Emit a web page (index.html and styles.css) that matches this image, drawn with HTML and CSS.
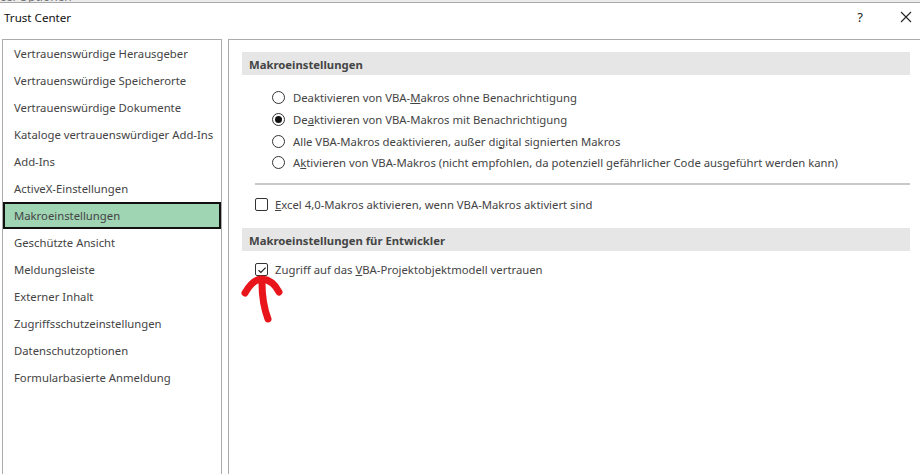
FILE: index.html
```html
<!DOCTYPE html>
<html lang="de">
<head>
<meta charset="utf-8">
<title>Trust Center</title>
<link rel="stylesheet" href="styles.css">
</head>
<body>
<div class="behind"><span class="behind-text">cel Optionen</span></div>
<div class="titlebar">
  <span class="title">Trust Center</span>
  <div class="controls">
    <span class="help">?</span>
    <svg class="close" width="12" height="12" viewBox="0 0 12 12"><path d="M1 1L11 11M11 1L1 11" stroke="#222" stroke-width="1.1" fill="none"/></svg>
  </div>
</div>
<div class="main">
  <nav class="nav">
    <div class="nav-item">Vertrauenswürdige Herausgeber</div>
    <div class="nav-item">Vertrauenswürdige Speicherorte</div>
    <div class="nav-item">Vertrauenswürdige Dokumente</div>
    <div class="nav-item">Kataloge vertrauenswürdiger Add-Ins</div>
    <div class="nav-item">Add-Ins</div>
    <div class="nav-item">ActiveX-Einstellungen</div>
    <div class="nav-item selected">Makroeinstellungen</div>
    <div class="nav-item">Geschützte Ansicht</div>
    <div class="nav-item">Meldungsleiste</div>
    <div class="nav-item">Externer Inhalt</div>
    <div class="nav-item">Zugriffsschutzeinstellungen</div>
    <div class="nav-item">Datenschutzoptionen</div>
    <div class="nav-item">Formularbasierte Anmeldung</div>
  </nav>
  <section class="content">
    <div class="section-header">Makroeinstellungen</div>
    <div class="radios">
      <div class="option"><span class="radio"></span><span>Deaktivieren von VBA-<u>M</u>akros ohne Benachrichtigung</span></div>
      <div class="option"><span class="radio checked"></span><span>De<u>a</u>ktivieren von VBA-Makros mit Benachrichtigung</span></div>
      <div class="option"><span class="radio"></span><span>Alle VBA-Makros deaktivieren, außer di<u>g</u>ital signierten Makros</span></div>
      <div class="option"><span class="radio"></span><span>A<u>k</u>tivieren von VBA-Makros (nicht empfohlen, da potenziell gefährlicher Code ausgeführt werden kann)</span></div>
    </div>
    <div class="separator"></div>
    <div class="check-row first"><span class="checkbox"></span><span><u>E</u>xcel 4,0-Makros aktivieren, wenn VBA-Makros aktiviert sind</span></div>
    <div class="section-header second">Makroeinstellungen für Entwickler</div>
    <div class="check-row dev">
      <span class="checkbox checked"><svg width="10" height="10" viewBox="0 0 10 10"><path d="M1.5 5.2L3.9 7.4L8.6 2.6" stroke="#222" stroke-width="1.2" fill="none"/></svg></span>
      <span>Zugriff auf das <u>V</u>BA-Projektobjektmodell vertrauen</span>
      <svg class="arrow" width="48" height="50" viewBox="0 0 48 50"><path d="M6 18 Q14 4 23 4 Q34 5 40 17 M23 8 Q23 28 29 44" stroke="#e8161b" stroke-width="7" stroke-linecap="round" stroke-linejoin="round" fill="none"/></svg>
    </div>
  </section>
</div>
</body>
</html>
```
FILE: styles.css
```css
* { box-sizing: border-box; }
html, body { margin: 0; padding: 0; }
body {
  width: 920px;
  height: 474px;
  overflow: hidden;
  background: #fff;
  font-family: "Noto Sans", "Open Sans", sans-serif;
  font-size: 11.3px;
  color: #444;
}
.behind {
  height: 3px;
  background: #ececec;
  border-bottom: 1px solid #a9a9a9;
  overflow: hidden;
}
.behind-text {
  display: block;
  margin-top: -10px;
  font-size: 12px;
  color: #777;
  line-height: 14px;
}
.titlebar {
  height: 36px;
  display: flex;
  align-items: center;
  justify-content: space-between;
  padding: 0 0 8px 4px;
}
.title {
  color: #111;
  font-size: 11.6px;
}
.controls {
  display: flex;
  align-items: center;
}
.help {
  color: #222;
  font-size: 13px;
  width: 46px;
  text-align: center;
  margin-right: 17px;
}
.close {
  margin-right: 8px;
}
.main {
  display: flex;
  gap: 6px;
  padding-left: 2px;
  height: 440px;
}
.nav {
  width: 220px;
  border: 1px solid #ababab;
  border-bottom: none;
  display: flex;
  flex-direction: column;
}
.nav-item {
  height: 27px;
  line-height: 28px;
  padding-left: 11px;
  white-space: nowrap;
  color: #444;
}
.nav-item.selected {
  background: #a0d5b4;
  border: 2px solid #111;
  line-height: 24px;
  padding-left: 9px;
}
.content {
  flex: 1;
  border-top: 1px solid #ababab;
  border-left: 1px solid #ababab;
  padding: 12px 10px 0 13px;
}
.section-header {
  height: 23px;
  line-height: 25px;
  background: #e6e6e6;
  font-weight: bold;
  padding-left: 7px;
  color: #444;
}
.radios {
  padding: 12px 0 0 30px;
  display: flex;
  flex-direction: column;
}
.option {
  height: 21.7px;
  display: flex;
  align-items: center;
  gap: 8px;
  white-space: nowrap;
}
.radio {
  width: 13px;
  height: 13px;
  border: 1px solid #333;
  border-radius: 50%;
  display: flex;
  align-items: center;
  justify-content: center;
  flex: none;
}
.radio.checked::after {
  content: "";
  width: 7px;
  height: 7px;
  border-radius: 50%;
  background: #111;
}
.separator {
  margin: 9px 0 0 13px;
  height: 2px;
  background: #c8c8c8;
}
.check-row {
  display: flex;
  align-items: center;
  gap: 7px;
  white-space: nowrap;
  height: 20px;
  padding-left: 13px;
}
.check-row.first {
  margin-top: 10px;
}
.check-row.dev {
  margin-top: 9px;
  position: relative;
}
.checkbox {
  width: 13px;
  height: 13px;
  border: 1px solid #333;
  border-radius: 2px;
  flex: none;
  display: flex;
  align-items: center;
  justify-content: center;
}
.section-header.second {
  margin-top: 13px;
}
.arrow {
  position: absolute;
  left: -3px;
  top: 15px;
}
```
